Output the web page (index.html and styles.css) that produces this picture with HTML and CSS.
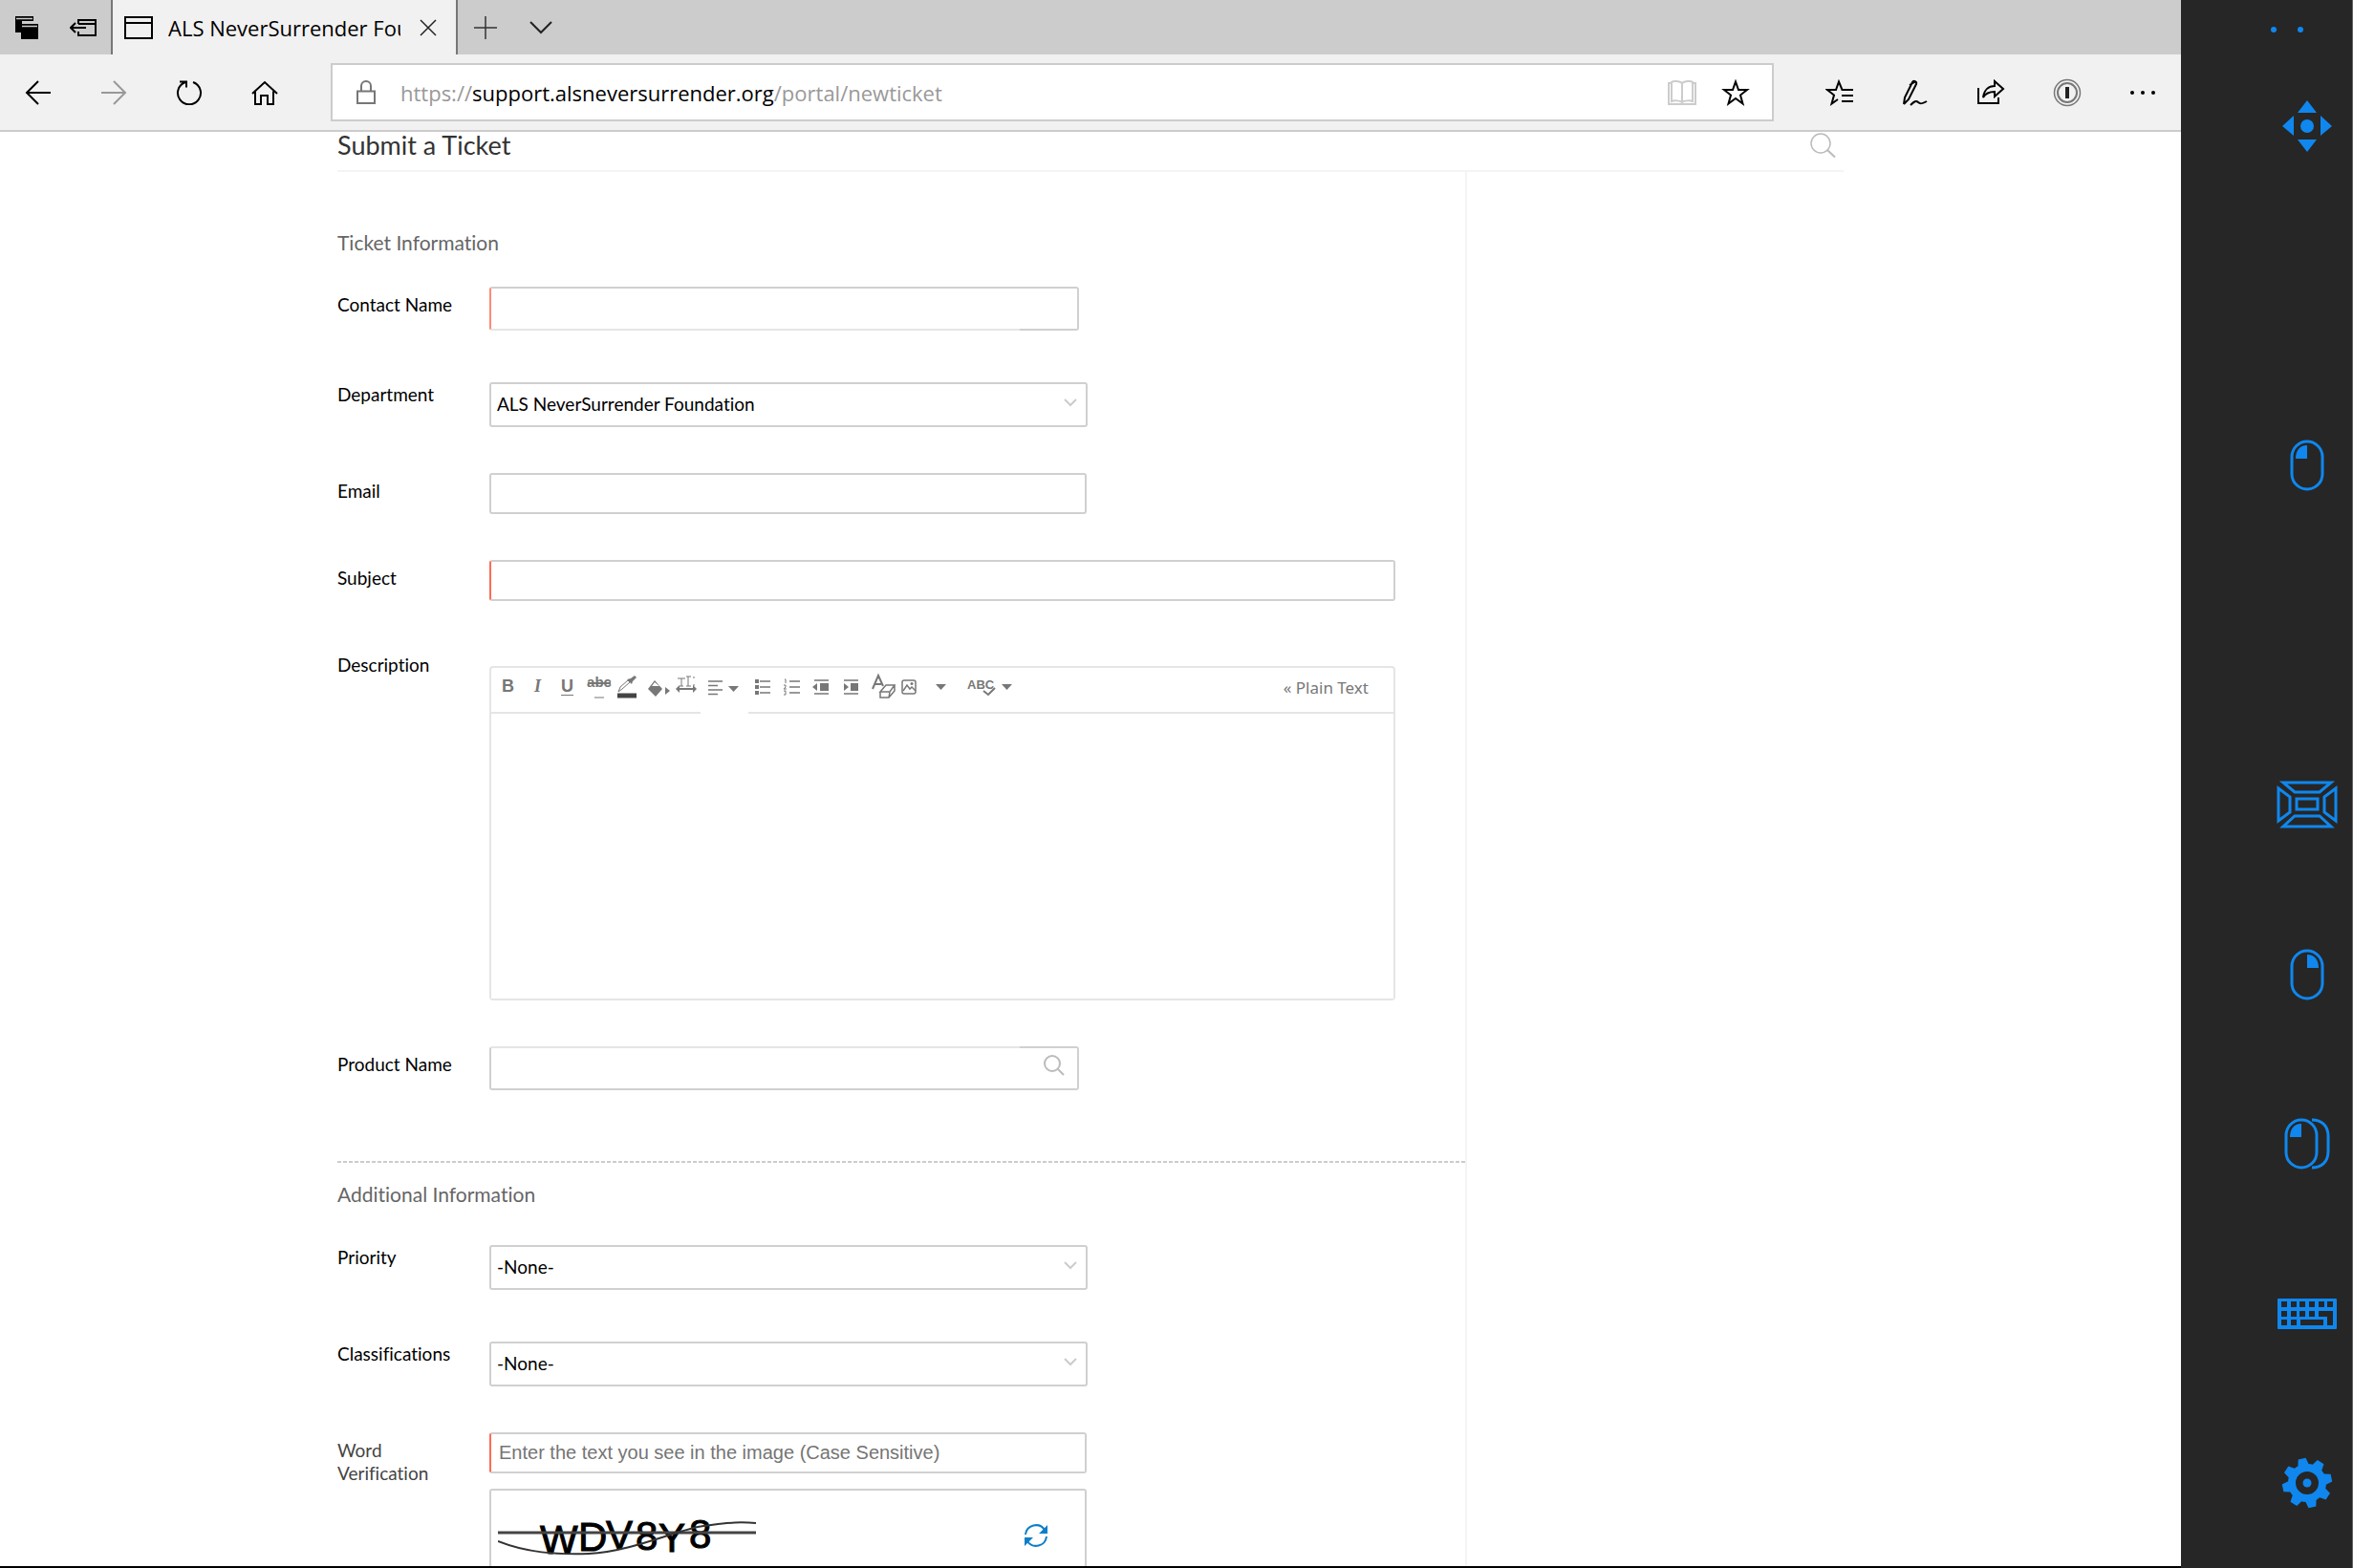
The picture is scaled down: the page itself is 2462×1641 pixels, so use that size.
FILE: index.html
```html
<!DOCTYPE html>
<html lang="en">
<head>
<meta charset="utf-8">
<title>ALS NeverSurrender Foundation</title>
<link rel="stylesheet" href="styles.css">
</head>
<body>
<div class="browser">
  <div class="tabbar">
    <button class="icon-btn tab-tool" aria-label="Tabs set aside">
      <svg width="26" height="26" viewBox="0 0 26 26"><path d="M1 1h19v5H8v12H1z"/><path d="M7 9h18v16H7z"/><path d="M2 3.500h17M8 11.500h16" stroke="#ccc" stroke-width="1.500"/></svg>
    </button>
    <button class="icon-btn tab-tool" aria-label="Set these tabs aside">
      <svg width="28" height="20" viewBox="0 0 28 20" fill="none" stroke="#000" stroke-width="2"><path d="M9 6V2h18v16H9v-4M9 6h18M1 10h16M6 5l-5 5 5 5"/></svg>
    </button>
    <div class="tab">
      <svg width="30" height="24" viewBox="0 0 30 24" fill="none" stroke="#000" stroke-width="2"><path d="M1 1h28v22H1zM1 7h28"/></svg>
      <span class="tab-title">ALS NeverSurrender Foundation</span>
      <button class="icon-btn" aria-label="Close tab">
        <svg width="18" height="18" viewBox="0 0 18 18" fill="none" stroke="#222" stroke-width="1.500"><path d="M1 1l16 16M17 1L1 17"/></svg>
      </button>
    </div>
    <button class="icon-btn new-tab" aria-label="New tab">
      <svg width="24" height="24" viewBox="0 0 24 24" fill="none" stroke="#333" stroke-width="1.500"><path d="M12 0v24M0 12h24"/></svg>
    </button>
    <button class="icon-btn" aria-label="Tab previews">
      <svg width="24" height="14" viewBox="0 0 24 14" fill="none" stroke="#222" stroke-width="2"><path d="M1 1l11 11L23 1"/></svg>
    </button>
  </div>

  <div class="toolbar">
    <div class="nav-buttons">
      <button class="icon-btn" aria-label="Back"><svg width="28" height="26" viewBox="0 0 28 26" fill="none" stroke="#000" stroke-width="2"><path d="M27 13H2M14 1L2 13l12 12"/></svg></button>
      <button class="icon-btn" aria-label="Forward"><svg width="28" height="26" viewBox="0 0 28 26" fill="none" stroke="#999" stroke-width="2"><path d="M1 13h25M14 1l12 12-12 12"/></svg></button>
      <button class="icon-btn" aria-label="Refresh"><svg width="28" height="26" viewBox="0 0 28 26" fill="none" stroke="#000" stroke-width="2"><path d="M18 2A12 12 0 1 1 10 2M4 1.500h7v6"/></svg></button>
      <button class="icon-btn" aria-label="Home"><svg width="28" height="26" viewBox="0 0 28 26" fill="none" stroke="#000" stroke-width="2"><path d="M1 14L14 2l13 12M4 11.500V25h6v-9h7v9h6V11.500"/></svg></button>
    </div>
    <div class="address">
      <svg width="20" height="25" viewBox="0 0 20 25" fill="none" stroke="#777" stroke-width="2"><path d="M1 11.500h18V24H1zM5 11V6a5 5 0 0 1 10 0v5"/></svg>
      <a class="url" href="#">https://<span class="url-host">support.alsneversurrender.org</span>/portal/newticket</a>
      <button class="icon-btn" aria-label="Reading view"><svg width="30" height="28" viewBox="0 0 30 28" fill="none" stroke="#ccc" stroke-width="2"><path d="M15 4v20M15 4c-2-2-9-3-11-1v20c2-1 9-1 11 1 2-2 9-2 11-1V3c-2-2-9-1-11 1M4 4H1v22h28V4h-3"/></svg></button>
      <button class="icon-btn" aria-label="Add to favorites"><svg width="30" height="28" viewBox="0 0 30 28" fill="none" stroke="#000" stroke-width="2"><path d="M15 2.500l3 8.500h9l-7 5.500 2.500 9L15 20l-7.500 5.500 2.500-9L3 11h9z"/></svg></button>
    </div>
    <div class="actions">
      <button class="icon-btn" aria-label="Hub"><svg width="30" height="28" viewBox="0 0 30 28" fill="none" stroke="#000" stroke-width="2"><path d="M29 11H17.500L14 2.500 11 11H2l7 5.500-2.500 9L13 21M17 17h12M17 23h12"/></svg></button>
      <button class="icon-btn" aria-label="Add notes"><svg width="28" height="28" viewBox="0 0 28 28" fill="none" stroke="#000" stroke-width="2"><path d="M2 26l1-7L11 3c1-2 5-1 4 2L7 21l-5 5M8 6l7-4M9 27c4-4 6-5 8-3s4 2 9-1"/></svg></button>
      <button class="icon-btn" aria-label="Share"><svg width="30" height="28" viewBox="0 0 30 28" fill="none" stroke="#000" stroke-width="2"><path d="M2 9v16h21v-6M7 19c1-8 6-12 12-12V2l9 8-9 8v-5c-5 0-9 1-12 6z"/></svg></button>
      <button class="icon-btn" aria-label="Password manager"><svg width="30" height="30" viewBox="0 0 30 30" fill="none" stroke="#777"><circle cx="15" cy="15" r="13.500" stroke-width="1.500"/><circle cx="15" cy="15" r="10" stroke-width="2"/><path d="M15 9v12" stroke="#222" stroke-width="4"/></svg></button>
      <button class="icon-btn" aria-label="Settings and more"><svg width="28" height="6" viewBox="0 0 28 6"><circle cx="3" cy="3" r="2"/><circle cx="14" cy="3" r="2"/><circle cx="25" cy="3" r="2"/></svg></button>
    </div>
  </div>

  <main class="page">
    <div class="content">
      <header class="page-head">
        <h1>Submit a Ticket</h1>
        <button class="icon-btn" aria-label="Search"><svg width="28" height="28" viewBox="0 0 28 28" fill="none" stroke="#bbb" stroke-width="1.500"><circle cx="12" cy="12" r="10"/><path d="M19 19l8 7.500" stroke-width="2"/></svg></button>
      </header>

      <form class="ticket">
        <h2>Ticket Information</h2>
        <div class="row">
          <label for="contact">Contact Name</label>
          <div class="combo combo-soft-bottom required"><input id="contact" type="text"><span class="combo-end"></span></div>
        </div>
        <div class="row row-select">
          <label for="department">Department</label>
          <div class="select"><select id="department"><option>ALS NeverSurrender Foundation</option></select><svg width="14" height="9" viewBox="0 0 14 9"><path d="M1 1l6 6 6-6"/></svg></div>
        </div>
        <div class="row">
          <label for="email">Email</label>
          <input class="field" id="email" type="email">
        </div>
        <div class="row">
          <label for="subject">Subject</label>
          <input class="field field-wide required" id="subject" type="text">
        </div>
        <div class="row row-editor">
          <label for="description">Description</label>
          <div class="editor">
            <div class="editor-tools">
              <button type="button" class="tool tool-bold">B</button>
              <button type="button" class="tool tool-italic">I</button>
              <button type="button" class="tool tool-underline">U</button>
              <button type="button" class="tool" aria-label="Strikethrough"><svg width="31" height="28" viewBox="0 0 31 28"><text class="glyph" x="18" y="15" font-size="15" text-anchor="middle">abc</text><path d="M6 11h24" stroke-width="2"/><path d="M13 26h10" stroke-width="1"/></svg></button>
              <button type="button" class="tool" aria-label="Font color"><svg width="31" height="28" viewBox="0 0 31 28"><path d="M7 20l2-5 8-7 2 2-8 7z" fill="none" stroke-width="1"/><path d="M16 7l5 5 1-3 4-4-2-2-4 3z" class="solid"/><path d="M6 24h20" stroke="#444" stroke-width="5"/></svg></button>
              <button type="button" class="tool" aria-label="Background color"><svg width="31" height="28" viewBox="0 0 31 28"><path d="M7 17l7-9 8 9-7 8z" class="solid"/><path d="M11 14l3-4 5 4z" fill="#fff" stroke="none"/><path d="M25 15l5 4-5 4z" class="solid"/></svg></button>
              <button type="button" class="tool" aria-label="Font size"><svg width="31" height="28" viewBox="0 0 31 28"><path d="M6 17h20" stroke-width="2"/><path d="M11 6v8M7 6h8M18 4v10M16 4h5M9 14h4M16 14h5M23 5h2M23 13h2" stroke-width="1" fill="none"/><path d="M5 17l4-4v8zM27 17l-4-4v8z" class="solid"/></svg></button>
              <button type="button" class="tool tool-align" aria-label="Align"><svg width="50" height="28" viewBox="0 0 50 28"><path d="M8 8h15M8 12.500h10M8 17h15M8 21.500h10" stroke-width="1.500"/><path d="M29 13h11l-5.500 6z" class="solid"/></svg></button>
              <button type="button" class="tool" aria-label="Bulleted list"><svg width="31" height="28" viewBox="0 0 31 28"><path d="M12 9h11M12 15h11M12 21h11" stroke-width="1.500"/><path d="M7 7h4v4H7zM7 13h4v4H7zM7 19h4v4H7z" class="solid"/></svg></button>
              <button type="button" class="tool" aria-label="Numbered list"><svg width="31" height="28" viewBox="0 0 31 28"><path d="M12 9h11M12 15h11M12 21h11" stroke-width="1.500"/><path d="M7 7h1v4M6 13h2v2l-2 2h3M6 19h2v4H6" fill="none" stroke-width="1"/></svg></button>
              <button type="button" class="tool" aria-label="Outdent"><svg width="31" height="28" viewBox="0 0 31 28"><path d="M7 8h15M7 22h15" stroke-width="1.500"/><path d="M5 15l5-4v8zM13 11h9v8h-9z" class="solid"/></svg></button>
              <button type="button" class="tool" aria-label="Indent"><svg width="31" height="28" viewBox="0 0 31 28"><path d="M7 8h15M7 22h15" stroke-width="1.500"/><path d="M12 15l-5-4v8zM14 11h8v8h-8z" class="solid"/></svg></button>
              <button type="button" class="tool" aria-label="Remove formatting"><svg width="31" height="28" viewBox="0 0 31 28"><path d="M6 17l6-14 5 11M8 12h7" fill="none" stroke-width="2"/><path d="M14 20l6-7h9l-5 7zM14 20v6h9l6-7v-6M24 20l-1 6" fill="#fff" stroke-width="1.500"/></svg></button>
              <button type="button" class="tool" aria-label="Insert image"><svg width="31" height="28" viewBox="0 0 31 28"><rect x="6" y="8" width="14" height="14" rx="2" fill="none" stroke-width="1.500"/><path d="M7 19l4-6 3 4 2-2 4 4" fill="none" stroke-width="1.500"/><circle cx="16" cy="11.500" r="1.500" class="solid"/></svg></button>
              <button type="button" class="tool" aria-label="More insert options"><svg width="31" height="28" viewBox="0 0 31 28"><path d="M10 12h11l-5.500 6z" class="solid"/></svg></button>
              <button type="button" class="tool tool-spell" aria-label="Spelling"><svg width="64" height="28" viewBox="0 0 64 28"><text class="glyph" x="12" y="17" font-size="13">ABC</text><path d="M29 19l5 4 7-7" fill="none" stroke-width="2"/><path d="M48 12h11l-5.500 6z" class="solid"/></svg></button>
              <button type="button" class="plain-text">« Plain Text</button>
            </div>
            <textarea id="description"></textarea>
          </div>
        </div>
        <div class="row">
          <label for="product">Product Name</label>
          <div class="combo combo-soft-top"><input id="product" type="text"><button type="button" class="combo-end" aria-label="Find product"><svg width="24" height="24" viewBox="0 0 24 24" fill="none" stroke="#bbb" stroke-width="2"><circle cx="10" cy="10" r="8"/><path d="M16 16l6 6"/></svg></button></div>
        </div>

        <hr>
        <h2 class="second">Additional Information</h2>
        <div class="row row-select">
          <label for="priority">Priority</label>
          <div class="select"><select id="priority"><option>-None-</option></select><svg width="14" height="9" viewBox="0 0 14 9"><path d="M1 1l6 6 6-6"/></svg></div>
        </div>
        <div class="row row-select">
          <label for="class">Classifications</label>
          <div class="select"><select id="class"><option>-None-</option></select><svg width="14" height="9" viewBox="0 0 14 9"><path d="M1 1l6 6 6-6"/></svg></div>
        </div>
        <div class="row">
          <label class="soft" for="word">Word Verification</label>
          <div class="verify">
            <input class="field required" id="word" type="text" placeholder="Enter the text you see in the image (Case Sensitive)">
            <div class="captcha">
              <svg width="270" height="60" viewBox="0 0 270 60"><g class="captcha-text"><text x="44" y="49">W</text><text x="84" y="46">D</text><text x="113" y="44">V</text><text x="144" y="45">8</text><text x="168" y="47">Y</text><text x="200" y="43">8</text></g><path d="M0 27h270" stroke="#444" stroke-width="3"/><path d="M0 36C30 48 60 50 95 49 140 47 190 23 215 20s35-5 55-3" fill="none" stroke="#333" stroke-width="2"/></svg>
              <button type="button" class="icon-btn" aria-label="Refresh image"><svg width="26" height="26" viewBox="0 0 26 26" fill="none" stroke="#0b7fc7" stroke-width="2"><path d="M2 12A11 11 0 0 1 22 7M24 14A11 11 0 0 1 4 19"/><path d="M25 2v9h-9zM1 24v-9h9z" fill="#0b7fc7" stroke="none"/></svg></button>
            </div>
          </div>
        </div>
      </form>
    </div>
  </main>
</div>

<nav class="gaze">
  <button class="grip" aria-label="Move bar"><svg width="34" height="10" viewBox="0 0 34 10"><circle cx="3" cy="5" r="3"/><circle cx="31" cy="5" r="3"/></svg></button>
  <button class="slot-1" aria-label="Reposition"><svg width="54" height="54" viewBox="0 0 54 54"><path d="M27 0l10 13H17zM27 54l10-13H17zM1 27l12-11v21zM53 27L41 16v21z"/><circle cx="27" cy="27" r="7"/></svg></button>
  <button class="slot-3" aria-label="Left click"><svg width="36" height="54" viewBox="0 0 36 54"><rect class="outline" x="2" y="2" width="32" height="50" rx="16"/><path d="M18 6v14H6C6 12 10 6 18 6z"/></svg></button>
  <button class="slot-5" aria-label="Precise target"><svg width="64" height="50" viewBox="0 0 64 50"><path class="outline" d="M7 2h50L45 12H19zM7 48h50L45 37H19zM2 8v34l12-9V17zM62 8v34l-12-9V17zM21 19h22v11H21z"/></svg></button>
  <button class="slot-6" aria-label="Right click"><svg width="36" height="54" viewBox="0 0 36 54"><rect class="outline" x="2" y="2" width="32" height="50" rx="16"/><path d="M18 6v14h12C30 12 26 6 18 6z"/></svg></button>
  <button class="slot-7" aria-label="Double click"><svg width="48" height="54" viewBox="0 0 48 54"><rect class="outline" x="2" y="2" width="32" height="50" rx="16"/><path d="M18 6v14H6C6 12 10 6 18 6z"/><path class="outline" d="M29 2c10 0 17 6 17 17v16c0 11-7 17-17 17"/></svg></button>
  <button class="slot-8" aria-label="Keyboard"><svg width="62" height="32" viewBox="0 0 62 32"><rect width="62" height="32" rx="1"/><path fill="#262626" d="M4 3h6v6H4zM14 3h6v6h-6zM23 3h6v6h-6zM33 3h6v6h-6zM43 3h6v6h-6zM52 3h6v6h-6zM4 13h6v6H4zM14 13h6v6h-6zM23 13h6v6h-6zM33 13h6v6h-6zM4 22h6v6H4zM14 22h6v6h-6zM24 22h24v6H24zM43 13h15v15h-6v-9h-9z"/></svg></button>
  <button class="slot-9" aria-label="Settings"><svg width="54" height="54" viewBox="-27 -27 54 54"><g transform="rotate(-12)"><path id="tooth" d="M-6-18l2-8h8l2 8z"/><use href="#tooth" transform="rotate(45)"/><use href="#tooth" transform="rotate(90)"/><use href="#tooth" transform="rotate(135)"/><use href="#tooth" transform="rotate(180)"/><use href="#tooth" transform="rotate(225)"/><use href="#tooth" transform="rotate(270)"/><use href="#tooth" transform="rotate(315)"/></g><circle r="16" fill="none" stroke="#0f87ee" stroke-width="8"/><circle r="4.500"/></svg></button>
</nav>
</body>
</html>
```
FILE: styles.css
```css
* { box-sizing: border-box; }

body {
  margin: 0;
  height: 100vh;
  display: grid;
  grid-template-columns: minmax(0, 1fr) 180px;
  overflow: hidden;
  background: #fff;
  color: #000;
  font-family: Lato, "Liberation Sans", sans-serif;
  font-size: 19px;
  line-height: 24px;
  font-variant-ligatures: none;
}

button { font: inherit; cursor: pointer; }
svg { display: block; flex: none; }

.icon-btn {
  flex: none;
  padding: 0;
  border: 0;
  background: none;
}

/* Browser chrome */
.browser {
  display: flex;
  flex-direction: column;
  min-height: 0;
  border-bottom: 2px solid #000;
}

.tabbar {
  flex: none;
  display: flex;
  align-items: center;
  height: 57px;
  background: #ccc;
  font-family: "Open Sans", "Noto Sans", sans-serif;
}

.tab-tool { width: 58px; padding-left: 15px; }

.tab {
  display: flex;
  align-items: center;
  align-self: stretch;
  gap: 16px;
  width: 363px;
  padding: 0 20px 0 12px;
  border: solid #777;
  border-width: 0 2px;
  background: #f1f1f1;
}

.tab-title {
  flex: 1;
  margin-right: 4px;
  overflow: hidden;
  white-space: nowrap;
  font-size: 22px;
}

.new-tab { margin: 0 34px 0 17px; }

.toolbar {
  flex: none;
  display: flex;
  align-items: center;
  height: 81px;
  border-bottom: 2px solid #ccc;
  background: #f1f1f1;
  font-family: "Open Sans", "Noto Sans", sans-serif;
}

.nav-buttons {
  display: flex;
  gap: 51px;
  width: 346px;
  padding-left: 26px;
}

.address {
  flex: 1;
  display: flex;
  align-items: center;
  gap: 26px;
  height: 61px;
  padding: 0 23px 0 25px;
  border: 2px solid #ccc;
  background: #fff;
}

.url {
  flex: 1;
  color: #999;
  font-size: 22px;
  text-decoration: none;
}

.url-host { color: #000; }

.actions {
  display: flex;
  align-items: center;
  gap: 50px;
  padding: 0 26px 0 54px;
}

/* Help desk page */
.page {
  flex: 1;
  min-height: 0;
  overflow: hidden;
}

.content {
  max-width: 1576px;
  margin: 0 auto;
}

.page-head {
  display: flex;
  justify-content: space-between;
  align-items: flex-start;
  height: 42px;
  padding-right: 8px;
  border-bottom: 2px solid #f4f4f4;
}

h1, h2 { margin: 0; font-weight: 400; }
h1 { color: #333; font-size: 27px; line-height: 28px; }
h2 { margin-bottom: 34px; color: #666; font-size: 21px; }
h2.second { margin-bottom: 41px; }

.ticket {
  width: 75%;
  padding-top: 62px;
  border-right: 2px solid #f4f4f4;
}

.row {
  display: flex;
  align-items: flex-start;
  margin-bottom: 48px;
}

.row > label { width: 159px; padding-top: 7px; }
.row > label.soft { padding-right: 50px; color: #444; }

.row-select { margin-top: 54px; }
.row-select > label { padding-top: 1px; }
h2 + .row-select { margin-top: 0; }

.field {
  width: 625px;
  height: 43px;
  padding: 0 8px;
  border: 2px solid #d0d0d0;
  border-radius: 3px;
  background: #fff;
  font: 20px "Liberation Sans", Arial, sans-serif;
}

.field::placeholder { color: #757575; opacity: 1; }
.field-wide { width: 948px; }
.field.required { border-left-color: #ff6b55; }

.combo { display: flex; width: 617px; height: 46px; }

.combo input {
  flex: 1;
  min-width: 0;
  border: 2px solid #d0d0d0;
  border-right: 0;
  border-radius: 3px 0 0 3px;
}

.combo-end {
  width: 62px;
  padding: 6px 0 0 24px;
  border: 2px solid #d0d0d0;
  border-left: 0;
  border-radius: 0 3px 3px 0;
  background: #fff;
}

.combo-end svg { margin-bottom: 12px; }
.combo-soft-bottom input { border-bottom-color: #e5e5e5; }
.combo-soft-top input { border-top-color: #e5e5e5; }
.combo.required input { border-left-color: #ff8a78; }

.select { display: grid; width: 626px; height: 47px; }

.select select {
  grid-area: 1 / 1;
  appearance: none;
  padding: 0 6px 2px;
  border: 2px solid #d0d0d0;
  border-radius: 3px;
  background: #fff;
  color: #000;
  font: inherit;
  font-variant-ligatures: none;
}

.select svg {
  grid-area: 1 / 1;
  place-self: center end;
  margin: 0 11px 4px 0;
  fill: none;
  stroke: #ccc;
  stroke-width: 2;
  pointer-events: none;
}

.row-editor > label { padding-top: 0; margin-top: 7px; }

/* Rich text editor */
.editor {
  width: 948px;
  margin-top: 20px;
  border: 2px solid #e5e5e5;
  border-radius: 4px;
}

.editor-tools {
  display: flex;
  height: 48px;
  padding: 0 26px 0 2px;
  border-bottom: 2px solid #e5e5e5;
}

.tool {
  flex: none;
  width: 31px;
  padding: 0 0 8px;
  border: 0;
  background: #fff;
  color: #777;
  font: bold 18px "Liberation Sans", Arial, sans-serif;
}

.tool svg { stroke: #777; }
.tool .solid { fill: #777; stroke: none; }
.glyph { fill: #777; stroke: none; font-family: "Liberation Sans", Arial, sans-serif; }
.tool-italic { font-family: "Liberation Serif", serif; font-style: italic; }
.tool-underline { text-decoration: underline; text-underline-offset: 3px; }
.tool-align { width: 50px; margin-bottom: -2px; }
.tool-spell { width: 64px; }

.plain-text {
  margin-left: auto;
  padding: 0 0 6px;
  border: 0;
  background: none;
  color: #777;
  font: 17px "Noto Sans", sans-serif;
}

textarea {
  display: block;
  width: 100%;
  height: 298px;
  border: 0;
  resize: none;
}

hr {
  height: 2px;
  margin: 74px 0 21px;
  border: 0;
  background: repeating-linear-gradient(90deg, #ccc 0 4px, #fff 4px 6px);
}

.verify { display: grid; gap: 16px; }

.captcha {
  display: flex;
  align-items: center;
  justify-content: space-between;
  width: 625px;
  height: 100px;
  padding: 0 38px 2px 7px;
  border: 2px solid #d0d0d0;
  border-radius: 3px;
}

.captcha-text {
  font: 42px "Liberation Sans", Arial, sans-serif;
  stroke: #000;
  stroke-width: 1px;
}

/* Gaze control bar */
.gaze {
  display: grid;
  grid-template-rows: 43px repeat(9, minmax(0, 1fr));
  padding-left: 84px;
  border-right: 1px solid #666;
  background: #262626;
}

.gaze button {
  display: grid;
  place-items: center;
  padding: 0;
  border: 0;
  background: none;
}

.gaze svg { fill: #0f87ee; }
.gaze .outline { fill: none; stroke: #0f87ee; stroke-width: 3px; }
.gaze .grip { place-items: end start; padding: 0 0 7px 10px; }
.slot-1 { grid-row: 2; }
.slot-3 { grid-row: 4; }
.slot-5 { grid-row: 6; }
.slot-6 { grid-row: 7; }
.slot-7 { grid-row: 8; }
.slot-8 { grid-row: 9; }
.slot-9 { grid-row: 10; }
```
